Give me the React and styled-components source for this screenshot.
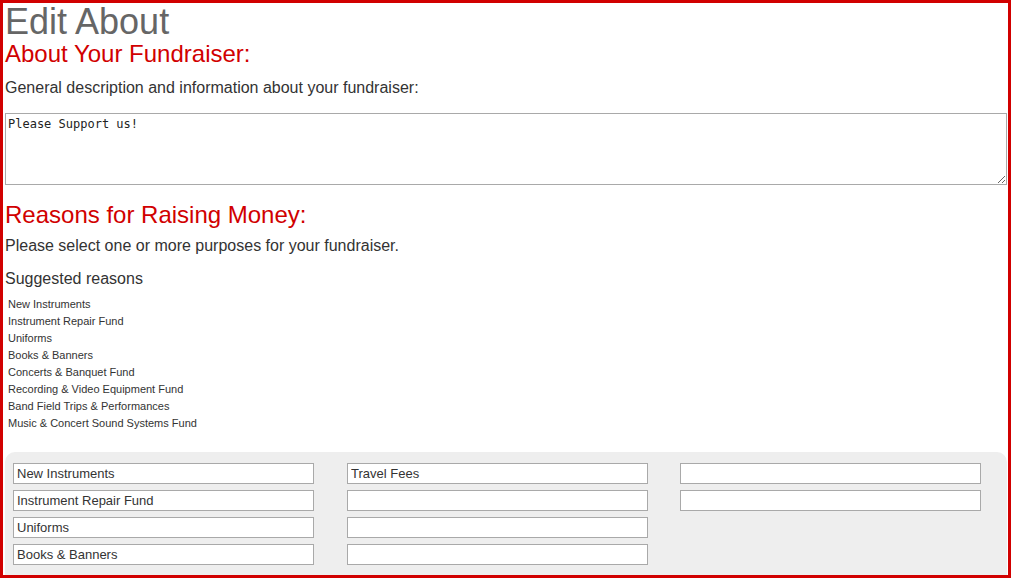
import React from "react";
import styled, { createGlobalStyle } from "styled-components";

const GlobalStyle = createGlobalStyle`
  html, body {
    margin: 0;
    padding: 0;
    background: #ffffff;
  }
  body {
    font-family: Arial, "Liberation Sans", sans-serif;
    color: #333333;
  }
`;

const Frame = styled.div`
  box-sizing: border-box;
  width: 1011px;
  height: 578px;
  border: 3px solid #d10000;
  padding: 0 1px 0 2px;
  overflow: hidden;
`;

const Title = styled.h1`
  margin: 0;
  font-size: 36px;
  line-height: 37px;
  font-weight: normal;
  color: #666666;
`;

const SectionTitle = styled.h2`
  margin: ${({ $top }) => $top || 0}px 0 0;
  font-size: 24px;
  line-height: 28px;
  font-weight: normal;
  color: #d10000;
`;

const Text = styled.p`
  margin: ${({ $top }) => $top}px 0 0;
  font-size: 16px;
  line-height: 20px;
  color: #333333;
`;

const Description = styled.textarea`
  display: block;
  box-sizing: border-box;
  width: 100%;
  height: 72px;
  margin: 15px 0 0;
  padding: 3px 2px;
  border: 1px solid #a9a9a9;
  font-family: "DejaVu Sans Mono", "Liberation Mono", monospace;
  font-size: 12px;
  line-height: 14px;
  color: #222222;
  background: #ffffff;
  resize: vertical;
  outline: none;
`;

const ReasonList = styled.ul`
  list-style: none;
  margin: 7px 0 0;
  padding: 0 0 0 3px;
`;

const ReasonItem = styled.li`
  font-size: 11px;
  line-height: 17px;
  color: #333333;
`;

const Panel = styled.div`
  margin-top: 20px;
  padding: 11px 0 20px;
  background: #eeeeee;
  border-radius: 10px 10px 0 0;
  display: grid;
  grid-template-columns: 334px 333px 1fr;
`;

const Column = styled.div`
  display: flex;
  flex-direction: column;
  gap: 6px;
  padding-left: 8px;
`;

const ReasonInput = styled.input`
  box-sizing: border-box;
  width: 301px;
  height: 21px;
  margin: 0;
  padding: 0 3px;
  border: 1px solid #a9a9a9;
  background: #ffffff;
  font-family: Arial, "Liberation Sans", sans-serif;
  font-size: 13px;
  color: #333333;
  outline: none;
`;

const suggested = [
  "New Instruments",
  "Instrument Repair Fund",
  "Uniforms",
  "Books & Banners",
  "Concerts & Banquet Fund",
  "Recording & Video Equipment Fund",
  "Band Field Trips & Performances",
  "Music & Concert Sound Systems Fund",
];

const columns = [
  ["New Instruments", "Instrument Repair Fund", "Uniforms", "Books & Banners"],
  ["Travel Fees", "", "", ""],
  ["", ""],
];

export default function App() {
  return (
    <>
      <GlobalStyle />
      <Frame>
        <Title>Edit About</Title>
        <SectionTitle>About Your Fundraiser:</SectionTitle>
        <Text $top={10}>General description and information about your fundraiser:</Text>
        <Description defaultValue="Please Support us!" />
        <SectionTitle $top={16}>Reasons for Raising Money:</SectionTitle>
        <Text $top={7}>Please select one or more purposes for your fundraiser.</Text>
        <Text $top={13}>Suggested reasons</Text>
        <ReasonList>
          {suggested.map((r) => (
            <ReasonItem key={r}>{r}</ReasonItem>
          ))}
        </ReasonList>
        <Panel>
          {columns.map((col, ci) => (
            <Column key={ci}>
              {col.map((v, i) => (
                <ReasonInput key={i} type="text" defaultValue={v} />
              ))}
            </Column>
          ))}
        </Panel>
      </Frame>
    </>
  );
}
